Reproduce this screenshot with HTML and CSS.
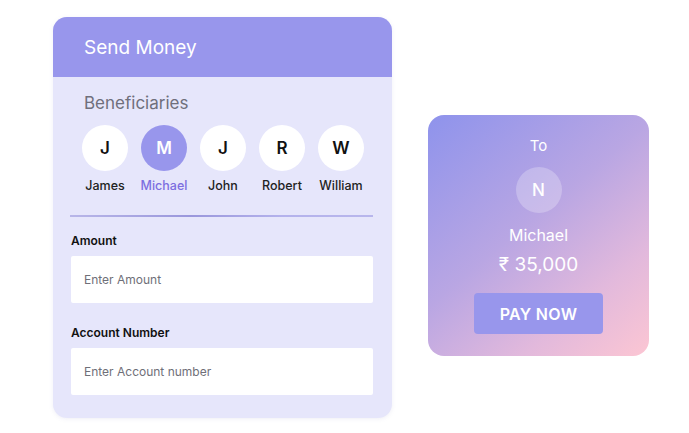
FILE: index.html
```html
<!DOCTYPE html>
<html>
<head>
<meta charset="utf-8">
<link rel="stylesheet" href="styles.css">
</head>
<body>
<div class="stage">
  <div class="send-card">
    <div class="send-head">Send Money</div>
    <div class="send-body">
      <div class="benef-title">Beneficiaries</div>
      <div class="benef-list">
        <div class="benef"><div class="avatar">J</div><div class="bname">James</div></div>
        <div class="benef active"><div class="avatar">M</div><div class="bname">Michael</div></div>
        <div class="benef"><div class="avatar">J</div><div class="bname">John</div></div>
        <div class="benef"><div class="avatar">R</div><div class="bname">Robert</div></div>
        <div class="benef"><div class="avatar">W</div><div class="bname">William</div></div>
      </div>
      <div class="divider"></div>
      <div class="field">
        <div class="flabel">Amount</div>
        <div class="finput">Enter Amount</div>
      </div>
      <div class="field">
        <div class="flabel">Account Number</div>
        <div class="finput">Enter Account number</div>
      </div>
    </div>
  </div>
  <div class="pay-card">
    <div class="to">To</div>
    <div class="pavatar">N</div>
    <div class="pname">Michael</div>
    <div class="pamount">₹ 35,000</div>
    <div class="pbtn">PAY NOW</div>
  </div>
</div>
</body>
</html>
```
FILE: styles.css
```css
* { box-sizing: border-box; }
html, body { margin: 0; padding: 0; background: #fff; }
body { font-family: Inter, "Open Sans", sans-serif; width: 689px; height: 433px; overflow: hidden; }
.stage { display: flex; align-items: flex-start; padding: 17px 0 0 53px; }
.send-card {
  width: 339px; height: 401px; border-radius: 14px; overflow: hidden;
  background: #e6e6fb; box-shadow: 0 1px 4px rgba(120,120,180,0.12);
}
.send-head {
  height: 60px; background: #9896ec; color: #fff;
  font-size: 19px; font-weight: 400; padding-left: 31px;
  display: flex; align-items: center; padding-top: 1px;
}
.send-body { padding: 16px 19px 0 19px; }
.benef-title { font-size: 17px; color: #6f6f7c; padding-left: 12px; line-height: 20px; }
.benef-list { display: flex; padding-left: 10px; margin-top: 12px; gap: 13px; }
.benef { width: 46px; display: flex; flex-direction: column; align-items: center; }
.avatar {
  width: 46px; height: 46px; border-radius: 50%; background: #fff;
  display: flex; align-items: center; justify-content: center;
  font-size: 17px; font-weight: 600; color: #111;
}
.bname { margin-top: 7px; font-size: 12.5px; font-weight: 500; color: #222; white-space: nowrap; line-height: 15px; }
.active .avatar { background: #9896ec; color: #fff; }
.active .bname { color: #7d6ee0; }
.divider {
  margin-top: 22px; height: 1.5px; margin-left: -2px;
  background: linear-gradient(90deg, #b8b6e8, #9a97dc 40%, #b4b2ec 70%, #b8b6ec);
}
.field { margin-top: 16px; }
.field + .field { margin-top: 22px; }
.flabel { font-size: 12px; font-weight: 600; color: #111; line-height: 16px; margin-left: -1px; }
.finput {
  margin-top: 7px; height: 47px; background: #fff; border-radius: 2px;
  display: flex; align-items: center; padding-left: 13px;
  font-size: 12px; color: #6f6f78; margin-left: -1px;
}
.pay-card {
  margin-left: 36px; margin-top: 98px; width: 221px; height: 241px; border-radius: 16px;
  background: linear-gradient(140deg, #8e93ec 0%, #b9a6e3 45%, #e2b9dc 75%, #fcc6d3 100%);
  display: flex; flex-direction: column; align-items: center; color: #fff;
  padding-top: 21px;
}
.to { font-size: 15px; line-height: 20px; }
.pavatar {
  margin-top: 11px; width: 46px; height: 46px; border-radius: 50%;
  background: rgba(255,255,255,0.25); display: flex; align-items: center; justify-content: center;
  font-size: 17px; font-weight: 500;
}
.pname { margin-top: 11px; font-size: 16px; line-height: 22px; }
.pamount { margin-top: 7px; font-size: 19px; line-height: 24px; }
.pbtn {
  margin-top: 16px; width: 129px; height: 41px; border-radius: 4px; background: #9896ec;
  display: flex; align-items: center; justify-content: center;
  font-size: 16px; font-weight: 600; letter-spacing: 0.3px;
}
```
